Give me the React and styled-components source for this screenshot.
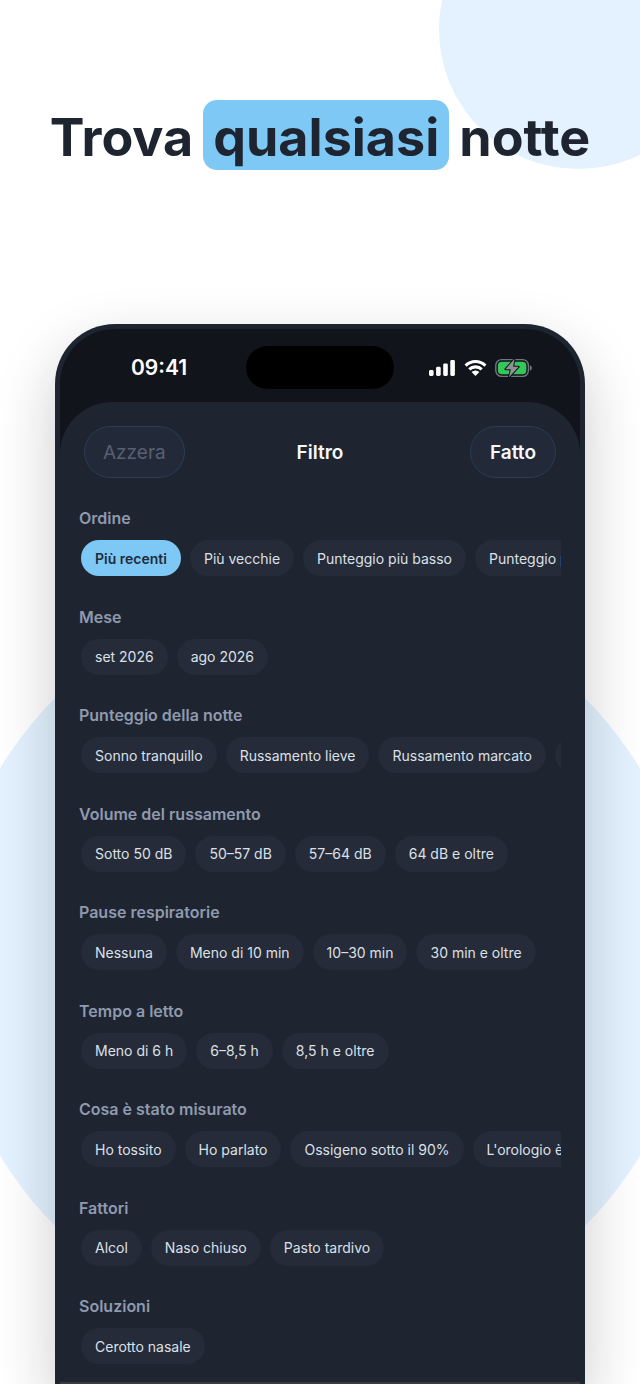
import { useState } from 'react';
import styled, { createGlobalStyle, css } from 'styled-components';

const GlobalStyle = createGlobalStyle`
  * {
    box-sizing: border-box;
  }

  body {
    margin: 0;
    background: #fff;
    color: #1e2430;
    font-family: Inter, 'Liberation Sans', sans-serif;
  }

  button {
    font-family: inherit;
  }
`;

const Page = styled.main`
  position: relative;
  z-index: 0;
  min-height: 100vh;
  display: flex;
  flex-direction: column;
  align-items: center;
  overflow: hidden;
`;

const Bubble = styled.div`
  position: absolute;
  z-index: -1;
  border-radius: 50%;
  background: #e3f2fe;
`;

const TopBubble = styled(Bubble)`
  top: -110px;
  right: -78px;
  width: 279px;
  height: 279px;
`;

const BackBubble = styled(Bubble)`
  top: 588px;
  left: 50%;
  width: 748px;
  height: 748px;
  transform: translateX(-50%);
`;

const Headline = styled.h1`
  margin: 100px 0 154px;
  display: flex;
  align-items: baseline;
  gap: 10px;
  font-size: 52px;
  font-weight: 700;
  line-height: 64px;
  white-space: nowrap;
`;

const Highlight = styled.mark`
  padding: 6px 10px 0;
  border-radius: 14px;
  background: #7ec8f6;
  color: inherit;
`;

const Phone = styled.div`
  width: calc(100% - 110px);
  flex: 1;
  display: flex;
  flex-direction: column;
  border: 5px solid #1e2530;
  border-bottom: 0;
  border-radius: 60px 60px 0 0;
  background: #11141b;
  box-shadow: 0 24px 60px rgba(16, 20, 32, 0.22);
  overflow: hidden;
`;

const StatusBar = styled.div`
  height: 73px;
  padding-top: 4px;
  display: grid;
  grid-template-columns: 1fr 148px 1fr;
  align-items: center;
`;

const Time = styled.time`
  padding-left: 12px;
  color: #fff;
  font-size: 21px;
  font-weight: 600;
  text-align: center;
`;

const Island = styled.div`
  height: 43px;
  border-radius: 22px;
  background: #000;
`;

const StatusIcons = styled.div`
  padding-right: 14px;
  display: flex;
  align-items: center;
  justify-content: center;
  gap: 8px;
`;

const Sheet = styled.section`
  flex: 1;
  display: flex;
  flex-direction: column;
  border-radius: 52px 52px 0 0;
  background: #1e2430;
`;

const Header = styled.header`
  padding: 24px 24px 0;
  display: grid;
  grid-template-columns: 1fr auto 1fr;
  align-items: center;
`;

const Title = styled.h2`
  margin: 0;
  color: #f6f7f9;
  font-size: 19px;
  font-weight: 600;
`;

const HeaderButton = styled.button`
  min-width: 86px;
  height: 52px;
  padding: 0 18px;
  justify-self: ${props => (props.$end ? 'end' : 'start')};
  border: 1px solid #2e3c55;
  border-radius: 26px;
  background: #222939;
  color: #f6f7f9;
  font-size: 19px;
  font-weight: 600;

  &:disabled {
    color: #596070;
    font-weight: 400;
  }
`;

const Groups = styled.div`
  flex: 1;
  padding: 30px 19px 18px;
  display: flex;
  flex-direction: column;
  justify-content: space-between;
`;

const Group = styled.section`
  display: flex;
  flex-direction: column;
  gap: 12px;
`;

const GroupTitle = styled.h3`
  margin: 0;
  color: #8f9aaf;
  font-size: 16px;
  font-weight: 600;
  line-height: 20px;
`;

const Chips = styled.div`
  padding-left: 2px;
  display: flex;
  gap: 9px;
  overflow-x: auto;
  scrollbar-width: none;
`;

const Chip = styled.button`
  height: 36px;
  padding: 0 14px;
  flex-shrink: 0;
  border: 0;
  border-radius: 18px;
  background: #252b38;
  color: #dce0e8;
  font-size: 14px;
  white-space: nowrap;

  ${props =>
    props.$selected &&
    css`
      background: #7ec8f6;
      color: #1e2c3c;
      font-weight: 600;
    `};
`;

const Footer = styled.div`
  height: 2px;
  background: #3b3c43;
`;

const groups = [
  {
    title: 'Ordine',
    options: [
      'Più recenti',
      'Più vecchie',
      'Punteggio più basso',
      'Punteggio più alto',
    ],
  },
  { title: 'Mese', options: ['set 2026', 'ago 2026'] },
  {
    title: 'Punteggio della notte',
    options: [
      'Sonno tranquillo',
      'Russamento lieve',
      'Russamento marcato',
      'Russamento forte',
    ],
  },
  {
    title: 'Volume del russamento',
    options: ['Sotto 50 dB', '50–57 dB', '57–64 dB', '64 dB e oltre'],
  },
  {
    title: 'Pause respiratorie',
    options: ['Nessuna', 'Meno di 10 min', '10–30 min', '30 min e oltre'],
  },
  { title: 'Tempo a letto', options: ['Meno di 6 h', '6–8,5 h', '8,5 h e oltre'] },
  {
    title: 'Cosa è stato misurato',
    options: ['Ho tossito', 'Ho parlato', 'Ossigeno sotto il 90%', "L'orologio è"],
  },
  { title: 'Fattori', options: ['Alcol', 'Naso chiuso', 'Pasto tardivo'] },
  { title: 'Soluzioni', options: ['Cerotto nasale'] },
];

const SignalIcon = () => (
  <svg width="27" height="18" viewBox="0 0 27 18" fill="#fff" aria-hidden="true">
    <rect x="0" y="11" width="4.6" height="6" rx="1.4" />
    <rect x="7.1" y="7.8" width="4.6" height="9.2" rx="1.4" />
    <rect x="14.2" y="4.4" width="4.6" height="12.6" rx="1.4" />
    <rect x="21.3" y="1" width="4.6" height="16" rx="1.4" />
  </svg>
);

const WifiIcon = () => (
  <svg width="23" height="18" viewBox="0 0 23 18" aria-hidden="true">
    <g fill="none" stroke="#fff" strokeWidth="3.1">
      <path d="M1.6 6.6a14 14 0 0 1 19.8 0" />
      <path d="M5.3 10.4a8.8 8.8 0 0 1 12.4 0" />
    </g>
    <path d="M11.5 17 7.6 13.1a5.4 5.4 0 0 1 7.8 0z" fill="#fff" />
  </svg>
);

const BatteryIcon = () => (
  <svg width="37" height="20" viewBox="0 0 37 20" aria-hidden="true">
    <rect
      x="0.8"
      y="1.6"
      width="32.6"
      height="16.8"
      rx="5.8"
      fill="none"
      stroke="#74777c"
      strokeWidth="1.4"
    />
    <path d="M34.9 7.2c1.2.5 1.9 1.5 1.9 2.8s-.7 2.3-1.9 2.8z" fill="#74777c" />
    <rect x="2.9" y="3.7" width="28.4" height="12.6" rx="3.8" fill="#34c759" />
    <path
      d="M19.6.8 10.4 11.2h5.4L14 19.2 23.7 8.8h-5.6z"
      fill="#8e9095"
      stroke="#11141b"
      strokeWidth="2"
      strokeLinejoin="round"
      paintOrder="stroke"
    />
  </svg>
);

const App = () => {
  const [selected, setSelected] = useState({ Ordine: 'Più recenti' });

  return (
    <>
      <GlobalStyle />
      <Page>
        <TopBubble />
        <BackBubble />
        <Headline>
          <span>Trova</span>
          <Highlight>qualsiasi</Highlight>
          <span>notte</span>
        </Headline>
        <Phone>
          <StatusBar>
            <Time>09:41</Time>
            <Island />
            <StatusIcons>
              <SignalIcon />
              <WifiIcon />
              <BatteryIcon />
            </StatusIcons>
          </StatusBar>
          <Sheet>
            <Header>
              <HeaderButton disabled>Azzera</HeaderButton>
              <Title>Filtro</Title>
              <HeaderButton $end>Fatto</HeaderButton>
            </Header>
            <Groups>
              {groups.map(({ title, options }) => (
                <Group key={title}>
                  <GroupTitle>{title}</GroupTitle>
                  <Chips>
                    {options.map(option => (
                      <Chip
                        key={option}
                        $selected={selected[title] === option}
                        aria-pressed={selected[title] === option}
                        onClick={() =>
                          setSelected({ ...selected, [title]: option })
                        }
                      >
                        {option}
                      </Chip>
                    ))}
                  </Chips>
                </Group>
              ))}
            </Groups>
            <Footer />
          </Sheet>
        </Phone>
      </Page>
    </>
  );
};

export default App;
